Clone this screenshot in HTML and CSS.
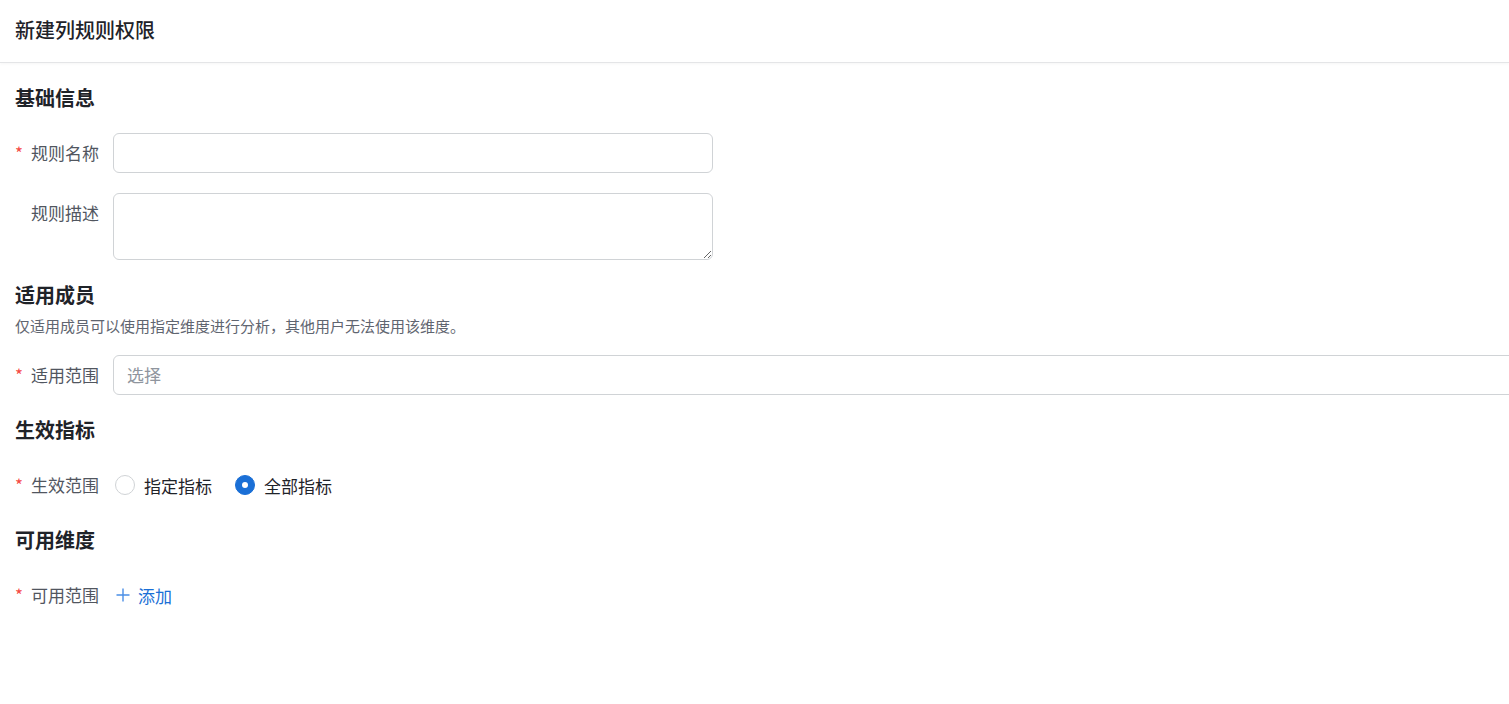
FILE: index.html
```html
<!DOCTYPE html>
<html lang="zh-CN">
<head>
    <meta charset="UTF-8">
    <meta name="viewport" content="width=device-width, initial-scale=1.0">
    <title>新建列规则权限</title>
    <link rel="stylesheet" href="styles.css">
</head>
<body>
    <header class="page-header">
        <h1>新建列规则权限</h1>
    </header>

    <main class="page-body">
        <h2 class="section-title">基础信息</h2>
        <div class="form-item">
            <label class="form-label required" for="ruleName">规则名称</label>
            <input class="text-input" type="text" id="ruleName">
        </div>
        <div class="form-item">
            <label class="form-label" for="ruleDesc">规则描述</label>
            <textarea class="text-area" id="ruleDesc"></textarea>
        </div>

        <h2 class="section-title">适用成员</h2>
        <p class="section-desc">仅适用成员可以使用指定维度进行分析，其他用户无法使用该维度。</p>
        <div class="form-item">
            <label class="form-label required">适用范围</label>
            <div class="select-box">选择</div>
        </div>

        <h2 class="section-title">生效指标</h2>
        <div class="form-item">
            <label class="form-label required">生效范围</label>
            <div class="radio-group">
                <label class="radio-item">
                    <span class="radio"></span>
                    指定指标
                </label>
                <label class="radio-item">
                    <span class="radio checked"></span>
                    全部指标
                </label>
            </div>
        </div>

        <h2 class="section-title">可用维度</h2>
        <div class="form-item">
            <label class="form-label required">可用范围</label>
            <button class="add-button" type="button">
                <svg width="14" height="14" viewBox="0 0 14 14" fill="none">
                    <path d="M7 0.5V13.5M0.5 7H13.5" stroke="#4a8ee6" stroke-width="1.4"/>
                </svg>
                添加
            </button>
        </div>
    </main>
</body>
</html>
```

FILE: styles.css
```css
:root {
    --text-title: #1f2329;
    --text-label: #51565f;
    --text-desc: #5f6570;
    --text-placeholder: #8f959e;
    --border-color: #d0d3d6;
    --primary-color: #1a6fd6;
    --required-color: #f54a45;
}

* {
    box-sizing: border-box;
    margin: 0;
    padding: 0;
}

body {
    font-family: "Noto Sans CJK SC", "Noto Sans", sans-serif;
    background: #fff;
    color: var(--text-title);
    overflow-x: hidden;
}

.page-header {
    height: 63px;
    padding: 0 15px;
    display: flex;
    align-items: center;
    border-bottom: 1px solid #e4e5e7;
    box-shadow: 0 1px 3px rgba(0, 0, 0, 0.04);
}

.page-header h1 {
    font-size: 20px;
    font-weight: 500;
    line-height: 28px;
    margin-top: -2px;
}

.page-body {
    padding: 0 0 40px 15px;
}

.section-title {
    font-size: 20px;
    font-weight: 600;
    line-height: 28px;
    margin-top: 21px;
    margin-bottom: 21px;
}

.section-desc {
    font-size: 15px;
    line-height: 22px;
    color: var(--text-desc);
    margin-top: -15px;
    margin-bottom: 18px;
}

.form-item {
    display: flex;
    align-items: flex-start;
    margin-bottom: 20px;
}

.form-item:has(+ .section-title) {
    margin-bottom: 0;
}

.form-label {
    width: 84px;
    flex-shrink: 0;
    margin-right: 14px;
    text-align: right;
    font-size: 17px;
    line-height: 40px;
    color: var(--text-label);
    white-space: nowrap;
}

.form-label.required::before {
    content: "*";
    color: var(--required-color);
    margin-right: 8px;
}

.text-input,
.text-area {
    width: 600px;
    border: 1px solid var(--border-color);
    border-radius: 6px;
    font-family: inherit;
    font-size: 16px;
    padding: 8px 12px;
    outline: none;
    background: #fff;
}

.text-input {
    height: 40px;
}

.text-area {
    height: 67px;
    resize: vertical;
}

.select-box {
    flex: 1;
    height: 40px;
    margin-right: -12px;
    border: 1px solid var(--border-color);
    border-radius: 6px;
    padding: 0 13px;
    font-size: 17px;
    line-height: 38px;
    color: var(--text-placeholder);
}

.radio-group {
    display: flex;
    align-items: center;
    height: 40px;
    padding-left: 2px;
}

.radio-item {
    display: flex;
    align-items: center;
    gap: 9px;
    margin-right: 23px;
    font-size: 17px;
    color: var(--text-title);
    cursor: pointer;
}

.radio {
    width: 20px;
    height: 20px;
    border-radius: 50%;
    border: 1px solid var(--border-color);
    background: #fff;
    display: flex;
    align-items: center;
    justify-content: center;
}

.radio.checked {
    border-color: var(--primary-color);
    background: var(--primary-color);
}

.radio.checked::after {
    content: "";
    width: 6px;
    height: 6px;
    border-radius: 50%;
    background: #fff;
}

.add-button {
    display: flex;
    align-items: center;
    gap: 8px;
    height: 40px;
    padding-left: 3px;
    border: none;
    background: none;
    font-family: inherit;
    font-size: 17px;
    color: var(--primary-color);
    cursor: pointer;
}
```
